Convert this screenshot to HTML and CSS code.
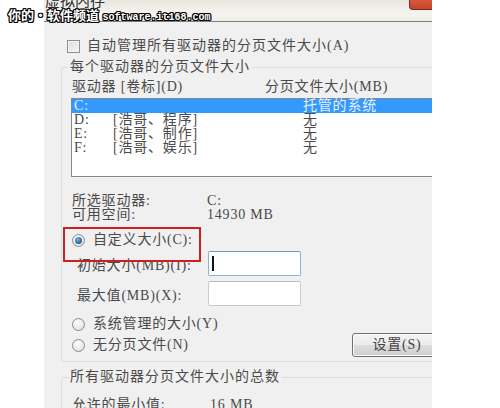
FILE: index.html
```html
<!DOCTYPE html>
<html lang="zh-CN">
<head>
<meta charset="utf-8">
<title>虚拟内存</title>
<link rel="stylesheet" href="styles.css">
</head>
<body>
<div class="watermark"><span class="wm-cn">你的•软件频道</span> <span class="wm-en">software.it168.com</span></div>
<div class="window">
  <div class="titlebar">
    <div class="title">虚拟内存</div>
    <div class="close"></div>
  </div>
  <div class="content">
    <div class="check-row"><span class="checkbox"></span><span>自动管理所有驱动器的分页文件大小(A)</span></div>
    <fieldset class="group g1">
      <legend>每个驱动器的分页文件大小</legend>
      <div class="list-head"><span class="lh1">驱动器 [卷标](D)</span><span>分页文件大小(MB)</span></div>
      <div class="listbox">
        <div class="item sel"><span class="c1">C:</span><span class="c2"></span><span class="c3">托管的系统</span></div>
        <div class="item"><span class="c1">D:</span><span class="c2">[浩哥、程序]</span><span class="c3">无</span></div>
        <div class="item"><span class="c1">E:</span><span class="c2">[浩哥、制作]</span><span class="c3">无</span></div>
        <div class="item"><span class="c1">F:</span><span class="c2">[浩哥、娱乐]</span><span class="c3">无</span></div>
      </div>
      <div class="info first"><span class="k">所选驱动器:</span><span>C:</span></div>
      <div class="info"><span class="k">可用空间:</span><span>14930 MB</span></div>
      <div class="radio-row custom"><span class="radio on"></span><span>自定义大小(C):</span></div>
      <div class="field-row r1"><span class="flabel">初始大小(MB)(I):</span><span class="input focus"><span class="caret"></span></span></div>
      <div class="field-row r2"><span class="flabel">最大值(MB)(X):</span><span class="input"></span></div>
      <div class="radio-row sys"><span class="radio"></span><span>系统管理的大小(Y)</span></div>
      <div class="radio-row last"><span class="rlabel"><span class="radio"></span><span>无分页文件(N)</span></span><span class="button">设置(S)</span></div>
    </fieldset>
    <fieldset class="group g2">
      <legend>所有驱动器分页文件大小的总数</legend>
      <div class="info"><span class="k wide">允许的最小值:</span><span>16 MB</span></div>
    </fieldset>
  </div>
</div>
</body>
</html>
```
FILE: styles.css
```css
* { box-sizing: border-box; }
html, body {
  margin: 0;
  padding: 0;
  background: #ffffff;
  width: 500px;
  height: 408px;
  overflow: hidden;
}
body {
  font-family: "Liberation Serif", "Noto Sans CJK SC", serif;
  font-size: 14px;
  color: #4a4a4a;
  position: relative;
}
.watermark {
  position: absolute;
  left: 8px;
  top: 8px;
  z-index: 5;
  color: #ffffff;
  line-height: 14px;
  font-weight: bold;
  white-space: nowrap;
  text-shadow: 1px 0 0 #000, -1px 0 0 #000, 0 1px 0 #000, 0 -1px 0 #000,
    1px 1px 0 #000, -1px -1px 0 #000, 1px -1px 0 #000, -1px 1px 0 #000;
}
.wm-cn {
  font-family: "Noto Sans CJK SC", sans-serif;
  font-size: 13px;
}
.wm-en {
  font-family: "Liberation Mono", monospace;
  font-size: 10px;
}
.window {
  margin-left: 44px;
  width: 388px;
  height: 408px;
  overflow: hidden;
}
.titlebar {
  height: 22px;
  position: relative;
  overflow: hidden;
  background: linear-gradient(180deg, #e9e7df 0%, #f4f3ee 60%, #f1f0ea 100%);
  border-bottom: 1px solid #7e7e7e;
}
.title {
  font-family: "Noto Sans CJK SC", sans-serif;
  font-size: 15px;
  line-height: 16px;
  margin-top: -8px;
  padding-left: 1px;
  color: #2e2e2e;
  text-shadow: 0 0 3px #ffffff;
}
.close {
  position: absolute;
  right: 0;
  top: 0;
  width: 23px;
  height: 10px;
  background: linear-gradient(180deg, #d9583c 0%, #c7432a 100%);
  border: 1px solid #6b3226;
  border-top: none;
  border-right: none;
  border-bottom-left-radius: 4px;
}
.content {
  background: #f0f0f0;
  height: 386px;
  padding: 16px 0 0 17px;
  letter-spacing: 0.8px;
}
.check-row {
  display: flex;
  align-items: center;
  height: 16px;
  line-height: 16px;
  padding-left: 6px;
  letter-spacing: 1px;
}
.checkbox {
  width: 13px;
  height: 13px;
  border: 1px solid #8e8f8f;
  background: linear-gradient(135deg, #dcdcdc 0%, #f6f6f6 100%);
  box-shadow: inset 0 0 0 1px #f4f4f4;
  margin-right: 7px;
  flex: none;
}
.group {
  border: 1px solid #d5dfe5;
  border-radius: 3px;
  margin: 0 -40px 0 0;
  min-width: 0;
  padding: 4px 0 4px 10px;
}
.group legend {
  line-height: 16px;
  padding: 0 2px;
  margin-left: -4px;
  letter-spacing: 1px;
}
.g1 { margin-top: 5px; }
.g2 { margin-top: 7px; padding-top: 13px; }
.list-head {
  display: flex;
  line-height: 16px;
  height: 16px;
}
.lh1 { width: 193px; }
.listbox {
  margin: 3px 0 0 -1px;
  height: 79px;
  border: 1px solid #828790;
  background: #ffffff;
}
.item {
  display: flex;
  height: 14px;
  line-height: 14px;
  padding-left: 2px;
  white-space: nowrap;
}
.item.sel {
  background: #3399ff;
  color: #e6f0ff;
}
.c1 { width: 39px; }
.c2 { width: 190px; }
.info {
  display: flex;
  line-height: 14px;
  height: 14px;
}
.info.first { margin-top: 17px; }
.k { width: 135px; }
.k.wide { width: 138px; }
.radio-row {
  display: flex;
  align-items: center;
  height: 16px;
  line-height: 16px;
}
.radio-row.custom {
  margin-top: 10px;
  position: relative;
}
.radio-row.custom::after {
  content: "";
  position: absolute;
  left: -9px;
  top: -5px;
  width: 134px;
  height: 31px;
  border: 2px solid #cc2020;
}
.radio {
  width: 13px;
  height: 13px;
  border-radius: 50%;
  border: 1px solid #8c8c8c;
  background: radial-gradient(circle at 40% 35%, #ffffff 0%, #e4e4e4 70%, #d0d0d0 100%);
  margin-right: 8px;
  flex: none;
  display: flex;
  align-items: center;
  justify-content: center;
}
.radio.on::before {
  content: "";
  width: 7px;
  height: 7px;
  border-radius: 50%;
  background: radial-gradient(circle at 40% 35%, #7fb2e6 0%, #23558f 75%);
}
.field-row {
  display: flex;
  align-items: center;
  height: 25px;
  padding-left: 5px;
}
.field-row.r1 { margin-top: 3px; }
.field-row.r2 { margin-top: 5px; }
.flabel { width: 131px; }
.input {
  width: 93px;
  height: 25px;
  background: #ffffff;
  border: 1px solid #c9cbcf;
  border-top-color: #b9bcc1;
  border-radius: 2px;
  display: flex;
  align-items: center;
}
.input.focus {
  border-color: #8fb0cf;
  border-top-color: #7596b8;
}
.caret {
  width: 2px;
  height: 15px;
  background: #111111;
  margin-left: 3px;
}
.radio-row.sys { margin-top: 10px; }
.radio-row.last {
  margin-top: 1px;
  height: 24px;
}
.rlabel {
  display: flex;
  align-items: center;
  width: 280px;
}
.button {
  width: 90px;
  height: 24px;
  flex: none;
  border: 1px solid #707070;
  border-radius: 3px;
  background: linear-gradient(180deg, #f3f3f3 0%, #ebebeb 48%, #dddddd 52%, #cfcfcf 100%);
  box-shadow: inset 0 0 0 1px #fbfbfb;
  text-align: center;
  line-height: 22px;
  color: #444444;
}
```
